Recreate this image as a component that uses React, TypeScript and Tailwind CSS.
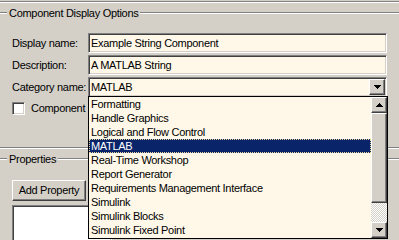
import React from "react";

const sunken =
  "border border-t-[#808080] border-l-[#808080] border-b-white border-r-white shadow-[inset_1px_1px_0_#404040,inset_-1px_-1px_0_#d4d0c8]";
const raised =
  "border border-t-white border-l-white border-b-[#404040] border-r-[#404040] shadow-[inset_-1px_-1px_0_#808080,inset_1px_1px_0_#d4d0c8] bg-[#d4d0c8]";

function Etched({ className = "" }: { className?: string }) {
  return <div className={`h-[2px] border-t border-t-[#808080] border-b border-b-white ${className}`} />;
}

function GroupHeader({ title }: { title: string }) {
  return (
    <div className="flex items-center h-[14px]">
      <Etched className="w-[7px] shrink-0" />
      <span className="px-[2px] leading-[14px] whitespace-nowrap">{title}</span>
      <Etched className="flex-1" />
    </div>
  );
}

function Arrow({ up = false }: { up?: boolean }) {
  return (
    <svg width="7" height="4" viewBox="0 0 7 4" className={up ? "rotate-180" : ""}>
      <path d="M0 0h7L3.5 4z" fill="#000" shapeRendering="crispEdges" />
    </svg>
  );
}

function Field({ label, value, combo = false }: { label: string; value: string; combo?: boolean }) {
  return (
    <div className="flex items-center h-[20px]">
      <span className="w-[76px] shrink-0 whitespace-nowrap">{label}</span>
      <div className={`w-[299px] h-[20px] bg-[#fff8e8] ${sunken} flex items-center pl-[2px] pr-[1px]`}>
        <span className="flex-1 whitespace-nowrap overflow-hidden">{value}</span>
        {combo && (
          <div className={`w-[16px] h-[16px] ${raised} flex items-center justify-center`}>
            <Arrow />
          </div>
        )}
      </div>
    </div>
  );
}

const items = [
  "Formatting",
  "Handle Graphics",
  "Logical and Flow Control",
  "MATLAB",
  "Real-Time Workshop",
  "Report Generator",
  "Requirements Management Interface",
  "Simulink",
  "Simulink Blocks",
  "Simulink Fixed Point",
];

export default function App() {
  return (
    <div className="relative w-[399px] h-[240px] overflow-hidden bg-[#d4d0c8] text-black text-[11px] tracking-[-0.3px] font-['Liberation_Sans',Arial,sans-serif]">
      <div className="mt-[1px] h-[2px] border-t border-t-[#808080] border-b border-b-white" />

      <div className="mt-[3px]">
        <GroupHeader title="Component Display Options" />
        <div className="pl-[12px] mt-[13px] flex flex-col gap-[2px]">
          <Field label="Display name:" value="Example String Component" />
          <Field label="Description:" value="A MATLAB String" />
          <Field label="Category name:" value="MATLAB" combo />
        </div>
        <div className="pl-[12px] mt-[5px] flex items-center h-[13px] gap-[6px]">
          <div className={`w-[13px] h-[13px] bg-white ${sunken}`} />
          <span className="whitespace-nowrap">Component</span>
        </div>
        <Etched className="mt-[32px]" />
      </div>

      <div className="mt-[3px]">
        <GroupHeader title="Properties" />
        <div className="pl-[12px] mt-[14px]">
          <button className={`w-[74px] h-[21px] ${raised} flex items-center justify-center whitespace-nowrap`}>
            Add Property
          </button>
          <div className={`mt-[4px] w-[100px] h-[60px] bg-white ${sunken}`} />
        </div>
      </div>

      <div className="absolute left-[88px] top-[96px] w-[300px] h-[143px] bg-[#fff8e8] border border-black flex">
        <div className="flex-1 flex flex-col">
          {items.map((it) =>
            it === "MATLAB" ? (
              <div
                key={it}
                className="h-[14px] leading-[12px] pl-[1px] bg-[#0a246a] text-white border border-dotted border-[#e8d8a0] whitespace-nowrap"
              >
                {it}
              </div>
            ) : (
              <div key={it} className="h-[14px] leading-[14px] pl-[2px] whitespace-nowrap">
                {it}
              </div>
            )
          )}
        </div>
        <div className="w-[16px] flex flex-col">
          <div className={`h-[16px] ${raised} flex items-center justify-center`}>
            <Arrow up />
          </div>
          <div className={`h-[90px] ${raised}`} />
          <div className="flex-1 bg-[repeating-conic-gradient(#d4d0c8_0_25%,#ffffff_0_50%)] bg-[length:2px_2px]" />
          <div className={`h-[16px] ${raised} flex items-center justify-center`}>
            <Arrow />
          </div>
        </div>
      </div>
    </div>
  );
}
